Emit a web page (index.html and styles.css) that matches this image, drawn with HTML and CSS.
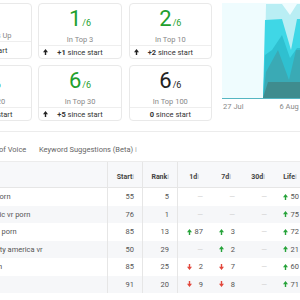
FILE: index.html
```html
<!DOCTYPE html>
<html lang="en">
<head>
    <meta charset="UTF-8">
    <title>Rank Tracker</title>
    <link rel="stylesheet" href="styles.css">
</head>
<body>
<div class="page">
    <div class="top">
        <div class="cards">
            <div class="card">
                <div class="card-body">
                    <div class="num green">4</div>
                    <div class="label">Keywords Up</div>
                </div>
                <div class="card-foot"><span></span><span>since start</span><span></span></div>
            </div>
            <div class="card">
                <div class="card-body">
                    <div class="num green">1<small>/6</small></div>
                    <div class="label">In Top 3</div>
                </div>
                <div class="card-foot">
                    <svg class="arr" width="5" height="6" viewBox="0 0 5 6"><path d="M2.5 0L5 3.2H3.2V6H1.8V3.2H0Z"/></svg>
                    <span><b>+1</b> since start</span><span></span>
                </div>
            </div>
            <div class="card">
                <div class="card-body">
                    <div class="num green">2<small>/6</small></div>
                    <div class="label">In Top 10</div>
                </div>
                <div class="card-foot">
                    <svg class="arr" width="5" height="6" viewBox="0 0 5 6"><path d="M2.5 0L5 3.2H3.2V6H1.8V3.2H0Z"/></svg>
                    <span><b>+2</b> since start</span><span></span>
                </div>
            </div>
            <div class="card">
                <div class="card-body">
                    <div class="num green">5<small>/6</small></div>
                    <div class="label">In Top 20</div>
                </div>
                <div class="card-foot">
                    <svg class="arr" width="5" height="6" viewBox="0 0 5 6"><path d="M2.5 0L5 3.2H3.2V6H1.8V3.2H0Z"/></svg>
                    <span><b>+4</b> since start</span><span></span>
                </div>
            </div>
            <div class="card">
                <div class="card-body">
                    <div class="num green">6<small>/6</small></div>
                    <div class="label">In Top 30</div>
                </div>
                <div class="card-foot">
                    <svg class="arr" width="5" height="6" viewBox="0 0 5 6"><path d="M2.5 0L5 3.2H3.2V6H1.8V3.2H0Z"/></svg>
                    <span><b>+5</b> since start</span><span></span>
                </div>
            </div>
            <div class="card">
                <div class="card-body">
                    <div class="num">6<small>/6</small></div>
                    <div class="label">In Top 100</div>
                </div>
                <div class="card-foot"><span></span><span><b>0</b> since start</span><span></span></div>
            </div>
        </div>

        <div class="chart">
            <div class="plot">
                <svg width="100" height="95" viewBox="0 0 100 95">
                    <polygon fill="#b9eef4" points="42,95 44,1 60,1 68,12 75,1 100,1 100,95"/>
                    <polygon fill="#3fd7e6" points="41,95 43,17 60,16 69,47 75,16 100,16 100,95"/>
                    <polygon fill="#2fc0d0" points="41,95 43,52 50,47 60,32 68,55 75,45 100,45 100,95"/>
                    <polygon fill="#3aaab5" points="41,95 44,69 56,47 67,77 74,47 100,47 100,95"/>
                    <polygon fill="#3f8c8e" points="41,95 46,79 100,79 100,95"/>
                </svg>
            </div>
            <div class="axis"><span>27 Jul</span><span>6 Aug</span></div>
        </div>
    </div>

    <div class="panel">
        <div class="tabs">
            <span>Share of Voice</span>
            <span>Keyword Suggestions (Beta) <i class="info">i</i></span>
        </div>
        <div class="table" id="table">
            <div class="row head">
                <div class="kw"></div>
                <div class="c num-col">Start <i class="info">i</i></div>
                <div class="c num-col">Rank <i class="info">i</i></div>
                <div class="c mid">1d <i class="info">i</i></div>
                <div class="c mid">7d <i class="info">i</i></div>
                <div class="c mid">30d <i class="info">i</i></div>
                <div class="c mid">Life <i class="info">i</i></div>
            </div>
        </div>
    </div>
</div>

<script>
    // keyword, start, rank, 1d, 7d, 30d, life  (positive = up, negative = down, null = no change)
    const rows = [
        ['best porn', 55, 5, null, null, null, 50],
        ['realistic vr porn', 76, 1, null, null, null, 75],
        ['virtual porn', 85, 13, 87, 3, null, 72],
        ['naughty america vr', 50, 29, null, 2, null, 21],
        ['vr porn', 85, 25, -2, -7, null, 60],
        ['vr sex', 91, 20, -9, -8, null, 71]
    ];

    const up = '<svg width="5" height="6" viewBox="0 0 5 6"><path d="M2.5 0L5 3.2H3.2V6H1.8V3.2H0Z"/></svg>';
    const down = '<svg width="5" height="6" viewBox="0 0 5 6"><path d="M2.5 6L5 2.8H3.2V0H1.8V2.8H0Z"/></svg>';

    function change(v) {
        if (v === null) {
            return '<div class="c chg none"><span class="dash">—</span></div>';
        }
        const cls = v > 0 ? 'up' : 'down';
        return `<div class="c chg ${cls}">${v > 0 ? up : down}<span>${Math.abs(v)}</span></div>`;
    }

    const table = document.getElementById('table');
    rows.forEach(r => {
        const row = document.createElement('div');
        row.className = 'row';
        row.innerHTML = `
            <div class="kw">${r[0]}</div>
            <div class="c num-col">${r[1]}</div>
            <div class="c num-col">${r[2]}</div>
            ${change(r[3])}${change(r[4])}${change(r[5])}${change(r[6])}
        `;
        table.appendChild(row);
    });
</script>
</body>
</html>
```

FILE: styles.css
```css
body {
    margin: 0;
    font-family: Roboto, "Liberation Sans", sans-serif;
    background-color: #fff;
    color: #333;
    overflow: hidden;
}

.page {
    margin-left: -52px;
    width: 420px;
}

.top {
    display: flex;
    gap: 10px;
    padding-top: 3px;
}

.cards {
    display: grid;
    grid-template-columns: repeat(3, 83.5px);
    grid-auto-rows: 56px;
    gap: 6px 6.8px;
}

.card {
    display: flex;
    flex-direction: column;
    border: 1px solid #e9e9e9;
    border-radius: 4px;
    box-sizing: border-box;
}

.card-body {
    flex: 1;
    text-align: center;
    padding-top: 3px;
}

.num {
    font-size: 22px;
    line-height: 24px;
    color: #222;
}

.num small {
    font-size: 9px;
    margin-left: 1px;
}

.green {
    color: #1f9f2e;
}

.label {
    font-size: 7.5px;
    line-height: 10px;
    color: #888;
}

.card-foot {
    display: grid;
    grid-template-columns: 12px 1fr 12px;
    align-items: center;
    height: 16px;
    border-top: 1px solid #eee;
    font-size: 7.5px;
    color: #333;
    text-align: center;
}

.card-foot .arr {
    margin-left: 4px;
    fill: #222;
}

.card-foot b {
    font-weight: 700;
}

.chart {
    width: 100px;
    flex: none;
}

.plot {
    height: 95px;
    background-color: #effcfe;
    border-bottom: 1px solid #55b6c2;
}

.plot svg {
    display: block;
}

.axis {
    display: flex;
    gap: 36px;
    padding-left: 1px;
    margin-top: 3px;
    font-size: 7.5px;
    line-height: 10px;
    color: #888;
}

.panel {
    margin-top: 10px;
    border-top: 1px solid #ececec;
}

.tabs {
    display: flex;
    align-items: flex-end;
    gap: 12.6px;
    height: 30px;
    padding: 0 0 6px 30px;
    box-sizing: border-box;
    border-bottom: 1px solid #ececec;
    font-size: 7.5px;
    line-height: 10px;
    color: #666;
}

.info {
    font-style: normal;
    font-weight: 400;
    color: #aaa;
}

.row {
    display: grid;
    grid-template-columns: 160px 35px 35px 32px 32px 32px 32px;
    height: 17.5px;
    font-size: 7.5px;
    color: #555;
}

.row:nth-child(odd) {
    background-color: #f6f7f9;
}

.row.head {
    height: 25px;
    background-color: #f7f8fa;
    border-bottom: 1px solid #e6e6e6;
    font-weight: 700;
    font-size: 7px;
    color: #444;
}

.row > div {
    display: flex;
    align-items: center;
}

.row.head > div {
    align-items: flex-end;
    padding-bottom: 6px;
}

.kw {
    padding-left: 31px;
    border-right: 1px solid #e6e6e6;
}

.num-col {
    justify-content: flex-end;
    padding-right: 8px;
    border-right: 1px solid #e6e6e6;
}

.row.head .mid {
    justify-content: center;
}

.row > .chg {
    justify-content: space-between;
    padding: 0 7px 0 9px;
}

.row > .chg.none {
    justify-content: flex-end;
}

.dash {
    color: #d0d0d0;
}

.up svg {
    fill: #26a33a;
}

.down svg {
    fill: #e2463b;
}
```
